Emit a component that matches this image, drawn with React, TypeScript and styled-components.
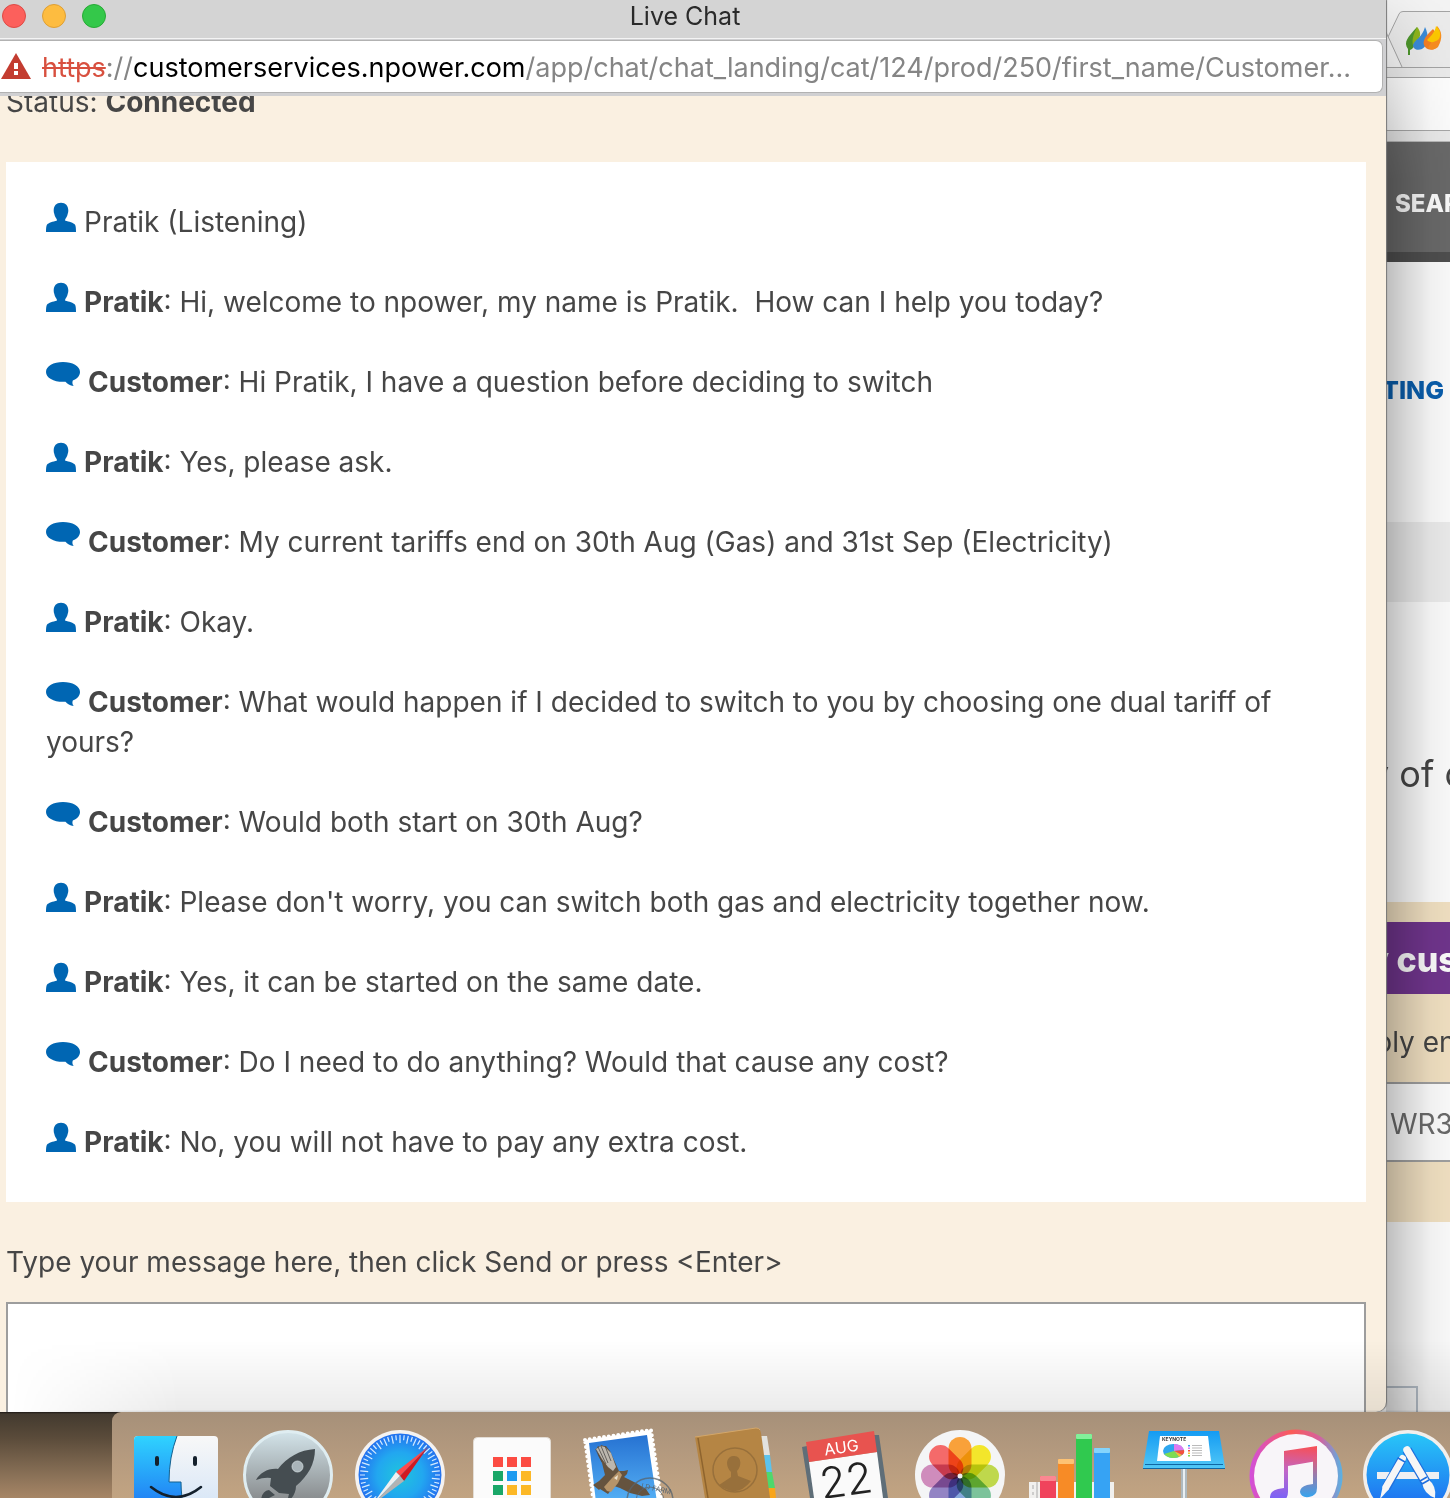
import React from "react";
import styled, { createGlobalStyle } from "styled-components";

const GlobalStyle = createGlobalStyle`
  *, *::before, *::after { box-sizing: border-box; }
  body { margin: 0; font-family: Inter, "Open Sans", sans-serif; color: #464646; overflow-x: hidden; }
`;

const Desktop = styled.main`
  overflow: hidden;
`;

const Windows = styled.div`
  display: grid;
  grid-template-columns: minmax(0, 1fr) 64px;
  background: #dadada;
`;

const ChatWindow = styled.section`
  display: flex;
  flex-direction: column;
  min-width: 0;
  position: relative;
  z-index: 1;
  overflow: hidden;
  background: #faf0e1;
  border-bottom-right-radius: 10px;
  box-shadow: 1px 0 1px #777;
`;

const TitleBar = styled.header`
  display: grid;
  grid-template-columns: 112px 1fr 128px;
  align-items: center;
  height: 38px;
  padding-bottom: 6px;
  background: #d4d4d4;
`;

const Lights = styled.div`
  display: flex;
  gap: 16px;
  padding-left: 2px;
`;

const Light = styled.button<{ $fill: string; $edge: string }>`
  width: 24px;
  height: 24px;
  padding: 0;
  border: 1px solid ${(p) => p.$edge};
  border-radius: 50%;
  background: ${(p) => p.$fill};
`;

const WindowTitle = styled.h1`
  margin: 0;
  font-size: 25px;
  line-height: 32px;
  font-weight: 400;
  text-align: center;
  color: #2a2a2a;
`;

const AddressBar = styled.div`
  padding: 1px 3px 3px 0;
  background: #d0d0d2;
  border-top: 1px solid #f4f4f4;
`;

const Address = styled.div`
  display: flex;
  align-items: center;
  gap: 10px;
  height: 53px;
  padding: 2px 10px 0 1px;
  border: 1px solid #b2b2b2;
  border-left: 0;
  border-radius: 0 7px 7px 0;
  background: #fff;
  svg { flex: none; margin-bottom: 4px; }
`;

const Url = styled.a`
  overflow: hidden;
  white-space: nowrap;
  text-decoration: none;
  font-family: Inter, sans-serif;
  font-size: 27px;
  line-height: 40px;
  color: #858585;
`;

const Scheme = styled.s`
  color: #d8503f;
`;

const Domain = styled.span`
  color: #000;
`;

const ChatBody = styled.div`
  flex: 1;
  padding: 0 20px 0 6px;
  overflow: hidden;
  font-size: 28px;
  line-height: 40px;
`;

const Status = styled.p`
  margin: -14px 0 40px;
`;

const Log = styled.ul`
  display: flex;
  flex-direction: column;
  gap: 40px;
  margin: 0;
  padding: 40px;
  list-style: none;
  background: #fff;
`;

const Message = styled.li`
  svg { margin-right: 8px; }
`;

const MessageLabel = styled.label`
  display: block;
  margin: 40px 0 20px;
`;

const MessageBox = styled.textarea`
  display: block;
  width: 100%;
  height: 110px;
  padding: 12px;
  resize: none;
  border: 2px solid #9d9d9d;
  border-bottom: 0;
  border-radius: 0;
  outline: 0;
  font: inherit;
`;

const BackPage = styled.aside`
  display: flex;
  flex-direction: column;
  position: relative;
  overflow: hidden;
  white-space: nowrap;
  &::after {
    content: "";
    position: absolute;
    inset: 0;
    pointer-events: none;
    background: linear-gradient(90deg, rgba(0,0,0,.26), rgba(0,0,0,.15) 35%, rgba(0,0,0,.06) 70%, rgba(0,0,0,.03));
    mask-image: linear-gradient(rgba(0,0,0,.1), #000 180px);
  }
`;

const Toolbar = styled.div`
  height: 74px;
  padding: 9px 0 11px;
  background: #ececec;
  border-bottom: 1px solid #bbb;
`;

const ToolbarField = styled.div`
  height: 54px;
  border: solid #a9a9a9;
  border-width: 1px 0;
  background: #fff;
`;

const Band = styled.div<{ $h: number; $bg: string; $indent?: number }>`
  height: ${(p) => p.$h}px;
  line-height: ${(p) => p.$h}px;
  background: ${(p) => p.$bg};
  text-indent: ${(p) => p.$indent || 0}px;
  font-size: 28px;
`;

const NavBand = styled(Band)`
  line-height: 124px;
  border-bottom: 10px solid #505050;
  font-size: 24px;
  font-weight: 800;
  color: #fff;
`;

const LinkBand = styled(Band)`
  line-height: 256px;
  font-size: 25px;
  a { font-weight: 800; color: #0a60b0; text-decoration: none; }
`;

const LeadBand = styled(Band)`
  line-height: 344px;
  font-size: 36px;
`;

const PurpleBand = styled(Band)`
  font-size: 34px;
  font-weight: 800;
  color: #fff;
  line-height: 76px;
`;

const FieldLabel = styled(Band)`
  line-height: 97px;
`;

const Postcode = styled.input`
  display: block;
  width: 100%;
  height: 80px;
  padding: 4px 0 0 4px;
  border: solid #a2a2a2;
  border-width: 2px 0;
  border-radius: 0;
  font: 28px Inter, sans-serif;
  color: #6c6c6c;
`;

const Footer = styled.div`
  flex: 1;
  display: flex;
  align-items: flex-end;
  background: #fff;
`;

const FooterBox = styled.div`
  width: 32px;
  height: 26px;
  border: 2px solid #bcc5cf;
  border-width: 2px 2px 0 0;
`;

const DockArea = styled.nav`
  position: relative;
  z-index: 2;
  padding-left: 112px;
  border-top: 1px solid transparent;
  margin-top: -1px;
  background: linear-gradient(#1e1916, #433a2f 2px, #5a4b3a 30%, #8b7258 75%, #a78666) padding-box;
  &::before {
    content: "";
    position: absolute;
    bottom: 100%;
    left: 0;
    right: 0;
    height: 72px;
    pointer-events: none;
    background: linear-gradient(transparent, rgba(0,0,0,.08) 97%, rgba(0,0,0,.2));
    mask-image: linear-gradient(90deg, transparent 10px, #000 180px);
  }
`;

const Dock = styled.div`
  display: flex;
  height: 86px;
  padding-left: 8px;
  overflow: hidden;
  border-top-left-radius: 9px;
  background: linear-gradient(#a69079, #b3997e 45%, #c2a482);
`;

const DockButton = styled.button`
  flex: 0 0 112px;
  height: 86px;
  padding: 0;
  border: 0;
  background: none;
  svg { display: block; }
`;

function PersonIcon() {
  return (
    <svg width="30" height="30" viewBox="0 0 30 30" aria-hidden="true">
      <path fill="#0066b3" d="M15 .8c4.600 0 7.300 3 7.300 7.500 0 1.500-.2 2.500-.5 3.300-.5 3-1.800 4.600-2.600 5.600v1.600c3.800 1 8.300 1.700 10 4.200.6 1.200.8 4 .8 7H0c0-3 .2-5.800.8-7 1.700-2.500 6.200-3.200 10-4.200v-1.600c-.8-1-2.100-2.600-2.600-5.600-.3-.8-.5-1.800-.5-3.300C7.700 3.800 10.400.8 15 .8z" />
    </svg>
  );
}

function BubbleIcon() {
  return (
    <svg width="34" height="30" viewBox="0 0 34 30" aria-hidden="true">
      <path fill="#0066b3" d="M17 0c9.500 0 17 4.100 17 9.900 0 3.600-2.600 6.700-7.200 8.500-.7 1.800-.5 3.900.9 5.600-3.700-.5-6.500-2.200-8.200-4.300-.8.100-1.600.1-2.500.1C7.500 19.800 0 15.700 0 9.900S7.500 0 17 0z" />
    </svg>
  );
}

function WarningIcon() {
  return (
    <svg width="31" height="28" viewBox="0 0 31 28" aria-hidden="true">
      <path fill="#c33c30" d="M15 1 30 27H0z" />
      <path fill="#fff" d="M13 11h4v6h-4zM13 19h4v4h-4z" />
    </svg>
  );
}

const TabArt = styled.svg`
  flex: none;
  display: block;
`;

function TabStrip() {
  return (
    <TabArt width="64" height="68" viewBox="0 0 64 68" aria-hidden="true">
      <rect width="64" height="68" fill="#f4f4f4" />
      <path d="M2 37 13 14q1-2.500 4-2.500H65V67.500H16z" fill="#ececec" />
      <path d="M0 32 16 67M2 37 13 14q1-2.500 4-2.500H65M0 67.500H65" fill="none" stroke="#a5a5a5" />
      <path d="M31 27c3 7 1 16-5 22l-2 1v5h-2v-6c-5-7 0-12 9-22z" fill="#4d962c" />
      <path d="M31 27c4 4 4 9 1 14l-4 7c-3-6-1-13 3-21z" fill="#8fb51c" />
      <path d="M39 27c4 8 4 18-3 22-5 2-9 0-9-4 2-6 9-7 12-18z" fill="#3c8bd8" />
      <path d="M47 29c-9 8-12 14-7 19 4 3 10 2 12-3 2-7-2-12-5-16z" fill="#f47f24" />
      <path d="M51 26c5 5 6 12 1 21-3 3-7 3-10 1 4-8 8-12 9-22z" fill="#f98e20" />
      <path d="M50 26c5 5 5 9 3 13-5 4-9 4-12 1 4-4 8-8 9-14z" fill="#fdc900" />
    </TabArt>
  );
}

const range = (n: number) => Array.from({ length: n }, (_, i) => i);

const petals = ["#f9a13a", "#f3e62b", "#bfd84c", "#7cc39b", "#86a8dc", "#9384c4", "#cf8cbc", "#f46a6a"];

const apps: { name: string; art: React.ReactNode }[] = [
  {
    name: "Finder",
    art: (
      <>
        <defs>
          <linearGradient id="fb" x2="0" y2="1"><stop stopColor="#2fd3ff" /><stop offset="1" stopColor="#2286f5" /></linearGradient>
          <linearGradient id="fw" x2="0" y2="1"><stop stopColor="#f8f8f8" /><stop offset="1" stopColor="#dbe8f7" /></linearGradient>
        </defs>
        <path d="M18 24H94q4 0 4 4V86H14V28q0-4 4-4z" fill="url(#fw)" />
        <path d="M18 24H57Q49 45 49 70H61Q61 78 62 86H14V28q0-4 4-4z" fill="url(#fb)" />
        <path d="M57 24Q49 45 49 70H61Q61 78 62 86" fill="none" stroke="#14618f" />
        <path d="M37 46v6M75 46v6" stroke="#14202c" strokeWidth="4" strokeLinecap="round" />
        <path d="M31 75Q56 95 81 75" fill="none" stroke="#14202c" strokeWidth="2.500" strokeLinecap="round" />
      </>
    ),
  },
  {
    name: "Launchpad",
    art: (
      <>
        <defs><linearGradient id="lp" x2="0" y2="1"><stop stopColor="#d3e4ea" /><stop offset=".75" stopColor="#8c9092" /></linearGradient></defs>
        <circle cx="56" cy="63" r="43.500" fill="url(#lp)" stroke="#dfedf1" strokeWidth="3" />
        <path d="M83 37C68 38 55 45 46 57 36 56 28 61 24 68q8-3 15-2l-1 8 9 7 10 1-2 8c5-3 9-9 9-16C76 64 83 52 83 37z" fill="#454d51" />
        <path d="M29 88q1-9 8-10l6 5-6 3-2 4z" fill="#454d51" />
        <circle cx="65.500" cy="54.500" r="5.500" fill="#a9b4b9" stroke="#d1dadd" strokeWidth=".8" />
      </>
    ),
  },
  {
    name: "Safari",
    art: (
      <>
        <defs><radialGradient id="sf"><stop stopColor="#1fc5dc" /><stop offset=".55" stopColor="#22a7f0" /><stop offset="1" stopColor="#2371ef" /></radialGradient></defs>
        <circle cx="56" cy="63" r="45" fill="#f4f2f1" />
        <circle cx="56" cy="63" r="41.500" fill="url(#sf)" />
        {range(60).map((i) => (
          <path key={i} d={i % 2 ? "M56 23v5" : "M56 23v8"} stroke="#d6ecff" strokeWidth="1.200" transform={`rotate(${i * 6} 56 63)`} />
        ))}
        <path d="M52 60 84 35 56 64z" fill="#ff4a4a" />
        <path d="M60 69 84 35 56 64z" fill="#d21a20" />
        <path d="M52 60 28 93 56 64z" fill="#f0f0f0" />
        <path d="M60 69 28 93 56 64z" fill="#b3b3b3" />
      </>
    ),
  },
  {
    name: "Chrome App Launcher",
    art: (
      <>
        <rect x="17.500" y="25.500" width="77" height="80" rx="4" fill="#fbfbfb" stroke="#e3ddd5" />
        {["#fc4c43", "#fc4c43", "#fc4c43", "#1aa768", "#1d9bf0", "#fcb827", "#1aa768", "#fcb827", "#fcb827"].map((c, i) => (
          <rect key={i} x={37 + (i % 3) * 14} y={45 + Math.floor(i / 3) * 14} width="10" height="10" fill={c} />
        ))}
      </>
    ),
  },
  {
    name: "Mail",
    art: (
      <>
        <defs><linearGradient id="ml" x2="0" y2="1"><stop stopColor="#2672d2" /><stop offset="1" stopColor="#55b0f5" /></linearGradient></defs>
        <path d="M17 28 83 18 95 100H27z" fill="#fff" stroke="#fff" strokeWidth="4" strokeDasharray="0 4.800" strokeLinecap="round" />
        <path d="M21 31 79 23 89 90H28z" fill="url(#ml)" />
        <path d="M27 38 29 36l1-2 2 1 1-2 3 1 2 0 4 5 4 9 5 11 5 0 4-1-1 4-3 3 12 6 10 6 4 6-8 1-12-3-10-5-6-2-6 8-8-5-1 1-6-5 6-4 6-6-3-12-4-8-1-5z" fill="#65533f" />
        <path d="M28 37 33 34l4 1 6 6 5 14-3 4-5-4-6-8z" fill="#bcb7ae" />
        <path d="m28 38 6 12M30 35l8 17M33 34l7 17M37 34l6 15" stroke="#4d4a47" strokeWidth=".8" />
        <path d="m44 66 7-7 3 4-4 8-7 9-4-1-3-4z" fill="#b6946a" />
        <path d="m46 66 4-3-1 5z" fill="#efe3ce" />
        <g fill="none" stroke="#59646d" opacity=".75">
          <circle cx="82" cy="89" r="23" strokeWidth="1.500" />
          <circle cx="82" cy="89" r="14" />
        </g>
        <text x="73" y="76" fontSize="7" fill="#59646d" fontFamily="Inter" transform="rotate(12 73 76)">LD FARM</text>
      </>
    ),
  },
  {
    name: "Contacts",
    art: (
      <>
        <path d="M80 24h7l3 19h-7z" fill="#e2e2df" />
        <path d="M83 43h7l2 17h-6z" fill="#5cc3ec" />
        <path d="M86 60h6l3 16h-7z" fill="#4ed86c" />
        <path d="M88 76h7l1 10h-7z" fill="#f8a51b" />
        <path d="M15 25 76 16q4 0 5 5L90 86H25z" fill="#b58544" />
        <path d="M15 25 76 16q3 0 4 2" fill="none" stroke="#d4a769" />
        <path d="m18 26 10 60" stroke="#8e642e" strokeWidth="1.500" />
        <circle cx="55" cy="58" r="22" fill="none" stroke="#98703b" strokeWidth="1.500" />
        <path d="M53 44c9-1 9 10 4 15l1 5 13 5q-14 18-32 4l12-8v-5c-6-6-5-15 2-16z" fill="#98703b" />
      </>
    ),
  },
  {
    name: "Calendar",
    art: (
      <>
        <path d="m10 35 5-1 10 52h-7zM82 23h5l9 63h-8z" fill="#5f6e78" />
        <path d="M17 50 85 40 91 86H22z" fill="#fafafa" />
        <path d="M14 30 82 19 85 40 17 50z" fill="#e8534f" />
        <g fontFamily="Inter" textAnchor="middle" transform="rotate(-8 50 40)">
          <text x="50" y="41" fontSize="16" fill="#fff">AUG</text>
          <text x="50" y="84" fontSize="43" fontWeight="300" fill="#222">22</text>
        </g>
      </>
    ),
  },
  {
    name: "Photos",
    art: (
      <>
        <circle cx="56" cy="63" r="45" fill="#f4f5f6" />
        <g style={{ isolation: "isolate" }}>
          {petals.map((c, i) => (
            <rect key={c} x="44.500" y="25" width="23" height="39" rx="11.500" fill={c} transform={`rotate(${i * 45} 56 64)`} style={{ mixBlendMode: "multiply" }} />
          ))}
        </g>
        <circle cx="56" cy="64" r="2.500" fill="#eee" />
      </>
    ),
  },
  {
    name: "Numbers",
    art: (
      <>
        <path d="M13 70h85v20H13z" fill="#f1f0ee" />
        <path d="M17 73v4M17 80v3M21 70v16" stroke="#aaa" />
        {[
          { x: 24, y: 64, body: "#f0435c", cap: "#fb8791" },
          { x: 42, y: 47, body: "#f78b26", cap: "#fdc274" },
          { x: 60, y: 22, body: "#30c94f", cap: "#83f09a" },
          { x: 78, y: 36, body: "#36a3f4", cap: "#84d4fc" },
        ].map((bar) => (
          <g key={bar.x}>
            <rect x={bar.x} y={bar.y} width="16" height="70" rx="1" fill={bar.body} />
            <rect x={bar.x} y={bar.y} width="16" height="5" rx="1" fill={bar.cap} />
          </g>
        ))}
      </>
    ),
  },
  {
    name: "Keynote",
    art: (
      <>
        <defs><linearGradient id="kn" x2="0" y2="1"><stop stopColor="#149bf3" /><stop offset="1" stopColor="#52c8f6" /></linearGradient></defs>
        <path d="M53 56h6v30h-6z" fill="#aeb9bf" />
        <path d="M55 56h2v30h-2z" fill="#e9eff2" />
        <path d="M21 19H91L97 55v2H15v-2z" fill="url(#kn)" />
        <path d="M17 52.500H95M15 56.500H97" stroke="#1067a4" />
        <path d="M32 24H80L83 49H29z" fill="#fff" />
        <text x="34" y="29" fontSize="5" fontWeight="700" fontFamily="Inter" fill="#333">KEYNOTE</text>
        <ellipse cx="45.500" cy="39" rx="10.500" ry="7" fill="#2ea6ee" />
        <path d="M46 39V32q8 0 10 6z" fill="#e07af0" />
        <path d="m46 39 10-1q1 3-2 5z" fill="#f4503e" />
        <path d="m46 39 8 4-3 2z" fill="#fbc02f" />
        <path d="m46 39 5 6q-9 3-15-3z" fill="#7edc52" />
        {["#2ea6ee", "#e07af0", "#f4503e", "#fbc02f", "#7edc52"].map((c, i) => (
          <g key={c}><rect x="60" y={33 + i * 2.5} width="2" height="1.500" fill={c} /><rect x="64" y={33 + i * 2.5} width="10" height="1" fill="#bbb" /></g>
        ))}
      </>
    ),
  },
  {
    name: "iTunes",
    art: (
      <>
        <defs>
          <linearGradient id="it" x1="0" y1=".6" x2="1" y2=".6"><stop stopColor="#d14fdc" /><stop offset=".45" stopColor="#fb5c57" /><stop offset=".75" stopColor="#d6609c" /><stop offset="1" stopColor="#56b3e6" /></linearGradient>
          <linearGradient id="nt" gradientUnits="userSpaceOnUse" x1="60" y1="34" x2="56" y2="86"><stop stopColor="#f65058" /><stop offset=".5" stopColor="#c067c8" /><stop offset="1" stopColor="#7f63f3" /></linearGradient>
          <linearGradient id="nr" x2="0" y2="1"><stop stopColor="#e85a78" /><stop offset="1" stopColor="#36a4ee" /></linearGradient>
        </defs>
        <circle cx="56" cy="64" r="46.500" fill="url(#it)" />
        <circle cx="56" cy="64" r="42" fill="#f8f5f9" />
        <path d="M44 39 77 34V49L48 54V80q0 10-11 10-7 0-7-5 0-6 8-8l6-1z" fill="url(#nt)" />
        <path d="M73 45h4V76q0 8-8 9-8 1-9-5 0-5 7-7l6-1z" fill="url(#nr)" />
      </>
    ),
  },
  {
    name: "App Store",
    art: (
      <>
        <defs><linearGradient id="as" x2="0" y2="1"><stop stopColor="#28c6f8" /><stop offset="1" stopColor="#1d62ef" /></linearGradient></defs>
        <circle cx="56" cy="63" r="45" fill="#f2efec" />
        <circle cx="56" cy="63" r="41.500" fill="url(#as)" />
        <path d="M25 60H87v7H25z" fill="#eef0f2" />
        <path d="M50 47 34 76" stroke="#2070dd" strokeWidth="9" />
        <path d="M55 38 76 74" stroke="#2070dd" strokeWidth="10" />
        <path d="M50.500 46.500 34 75" stroke="#f6f6f6" strokeWidth="7" strokeLinecap="round" />
        <path d="m31 73 6 4-9 10z" fill="#f6f6f6" />
        <path d="M55 38 72 67" stroke="#f6f6f6" strokeWidth="7.500" strokeLinecap="round" />
        <path d="m70 71 6-4q9 7 7 19-11-4-13-15z" fill="#f6f6f6" />
        <path d="m46 46 7 4M68 69l7-4M70 72l7-4" stroke="#1f6fe0" strokeWidth="1.500" />
      </>
    ),
  },
];

const messages: { from?: "Pratik" | "Customer"; text: string }[] = [
  { text: "Pratik (Listening)" },
  { from: "Pratik", text: "Hi, welcome to npower, my name is Pratik.\u00a0 How can I help you today?" },
  { from: "Customer", text: "Hi Pratik, I have a question before deciding to switch" },
  { from: "Pratik", text: "Yes, please ask." },
  { from: "Customer", text: "My current tariffs end on 30th Aug (Gas) and 31st Sep (Electricity)" },
  { from: "Pratik", text: "Okay." },
  { from: "Customer", text: "What would happen if I decided to switch to you by choosing one dual tariff of yours?" },
  { from: "Customer", text: "Would both start on 30th Aug?" },
  { from: "Pratik", text: "Please don't worry, you can switch both gas and electricity together now." },
  { from: "Pratik", text: "Yes, it can be started on the same date." },
  { from: "Customer", text: "Do I need to do anything? Would that cause any cost?" },
  { from: "Pratik", text: "No, you will not have to pay any extra cost." },
];

export default function App() {
  return (
    <Desktop>
      <GlobalStyle />
      <Windows>
        <ChatWindow>
          <TitleBar>
            <Lights>
              <Light $fill="#fc605c" $edge="#de4a45" aria-label="Close" />
              <Light $fill="#fdbc40" $edge="#de9f34" aria-label="Minimise" />
              <Light $fill="#34c84a" $edge="#27aa35" aria-label="Zoom" />
            </Lights>
            <WindowTitle>Live Chat</WindowTitle>
          </TitleBar>
          <AddressBar>
            <Address>
              <WarningIcon />
              <Url href="#">
                <Scheme>https</Scheme>://<Domain>customerservices.npower.com</Domain>/app/chat/chat_landing/cat/124/prod/250/first_name/Customer...
              </Url>
            </Address>
          </AddressBar>
          <ChatBody>
            <Status>Status: <b>Connected</b></Status>
            <Log>
              {messages.map((m) => (
                <Message key={m.text}>
                  {m.from === "Customer" ? <BubbleIcon /> : <PersonIcon />}
                  {m.from && <><b>{m.from}</b>: </>}
                  {m.text}
                </Message>
              ))}
            </Log>
            <MessageLabel htmlFor="message">Type your message here, then click Send or press &lt;Enter&gt;</MessageLabel>
            <MessageBox id="message" />
          </ChatBody>
        </ChatWindow>
        <BackPage>
          <TabStrip />
          <Toolbar><ToolbarField /></Toolbar>
          <NavBand $h={120} $bg="#6b6b6b" $indent={9}>SEARCH</NavBand>
          <LinkBand $h={260} $bg="#fff" $indent={-4}><a href="#">TING</a></LinkBand>
          <Band $h={80} $bg="#efefef" />
          <LeadBand $h={300} $bg="#fff" $indent={-17}>y of c</LeadBand>
          <Band $h={20} $bg="#f5e4c5" />
          <PurpleBand $h={72} $bg="#72368f" $indent={-18}>y cus</PurpleBand>
          <FieldLabel as="label" htmlFor="postcode" $h={88} $bg="#f5e4c5" $indent={-11}>ply en</FieldLabel>
          <Postcode id="postcode" defaultValue="WR3" />
          <Band $h={60} $bg="#f5e4c5" />
          <Footer><FooterBox /></Footer>
        </BackPage>
      </Windows>
      <DockArea aria-label="Dock">
        <Dock>
          {apps.map((app) => (
            <DockButton key={app.name} aria-label={app.name}>
              <svg width="112" height="86" viewBox="0 0 112 86" aria-hidden="true">{app.art}</svg>
            </DockButton>
          ))}
        </Dock>
      </DockArea>
    </Desktop>
  );
}
